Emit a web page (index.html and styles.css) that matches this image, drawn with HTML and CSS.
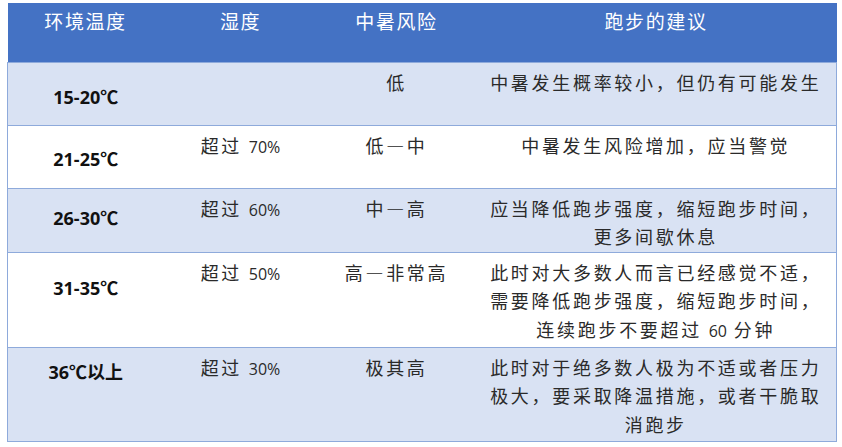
FILE: index.html
```html
<!DOCTYPE html>
<html lang="zh-CN">
<head>
<meta charset="utf-8">
<title>跑步与中暑风险</title>
<link rel="stylesheet" href="styles.css">
</head>
<body>
<table class="heat">
  <colgroup>
    <col class="c1"><col class="c2"><col class="c3"><col class="c4">
  </colgroup>
  <thead>
    <tr class="head">
      <th>环境温度</th>
      <th>湿度</th>
      <th>中暑风险</th>
      <th>跑步的建议</th>
    </tr>
  </thead>
  <tbody>
    <tr class="r1 shade">
      <td class="temp"><span class="num">15-20℃</span></td>
      <td></td>
      <td>低</td>
      <td>中暑发生概率较小，但仍有可能发生</td>
    </tr>
    <tr class="r2">
      <td class="temp"><span class="num">21-25℃</span></td>
      <td>超过 <span class="num">70%</span></td>
      <td>低—中</td>
      <td>中暑发生风险增加，应当警觉</td>
    </tr>
    <tr class="r3 shade">
      <td class="temp"><span class="num">26-30℃</span></td>
      <td>超过 <span class="num">60%</span></td>
      <td>中—高</td>
      <td>应当降低跑步强度，缩短跑步时间，<br>更多间歇休息</td>
    </tr>
    <tr class="r4">
      <td class="temp"><span class="num">31-35℃</span></td>
      <td>超过 <span class="num">50%</span></td>
      <td>高—非常高</td>
      <td>此时对大多数人而言已经感觉不适，<br>需要降低跑步强度，缩短跑步时间，<br>连续跑步不要超过 <span class="num">60</span> 分钟</td>
    </tr>
    <tr class="r5 shade">
      <td class="temp"><span class="num">36℃</span>以上</td>
      <td>超过 <span class="num">30%</span></td>
      <td>极其高</td>
      <td>此时对于绝多数人极为不适或者压力<br>极大，要采取降温措施，或者干脆取<br>消跑步</td>
    </tr>
  </tbody>
</table>
</body>
</html>
```
FILE: styles.css
```css
html, body {
  margin: 0;
  padding: 0;
  background: #ffffff;
}

.heat {
  margin: 3px 0 0 7px;
  width: 829px;
  border-collapse: collapse;
  table-layout: fixed;
  font-family: "Noto Sans CJK SC", sans-serif;
}

.c1 { width: 156px; }
.c2 { width: 154px; }
.c3 { width: 158px; }
.c4 { width: 361px; }

.head {
  height: 59px;
  background: #4472c4;
}

.head th {
  color: #ffffff;
  font-weight: 400;
  font-size: 19px;
  letter-spacing: 1.6px;
  line-height: 28px;
  vertical-align: top;
  text-align: center;
  padding: 4px 0 0;
}

tbody tr {
  border-top: 1px solid #8eaadb;
  border-left: 1px solid #8eaadb;
  border-right: 1px solid #8eaadb;
}

tbody tr:last-child {
  border-bottom: 1px solid #8eaadb;
}

.shade { background: #d9e2f3; }

.r1 { height: 63px; }
.r2 { height: 63px; }
.r3 { height: 64px; }
.r4 { height: 95px; }
.r5 { height: 94px; }

tbody td {
  vertical-align: top;
  text-align: center;
  white-space: nowrap;
  color: #2a2a2a;
  font-size: 18px;
  font-weight: 400;
  letter-spacing: 2.7px;
  line-height: 28.5px;
  padding: 5px 0 0;
}

.num {
  font-family: "Open Sans", "Noto Sans CJK SC", sans-serif;
  letter-spacing: 0;
  font-weight: 400;
  font-size: 16px;
}

td.temp {
  font-weight: 700;
  color: #111111;
  letter-spacing: 0;
}

td.temp .num {
  font-weight: 700;
  font-size: 18px;
}

.r1 td.temp { padding-top: 19px; }
.r2 td.temp { padding-top: 18px; }
.r3 td.temp { padding-top: 14px; }
.r4 td.temp { padding-top: 20px; }
.r5 td.temp { padding-top: 9px; }
```
